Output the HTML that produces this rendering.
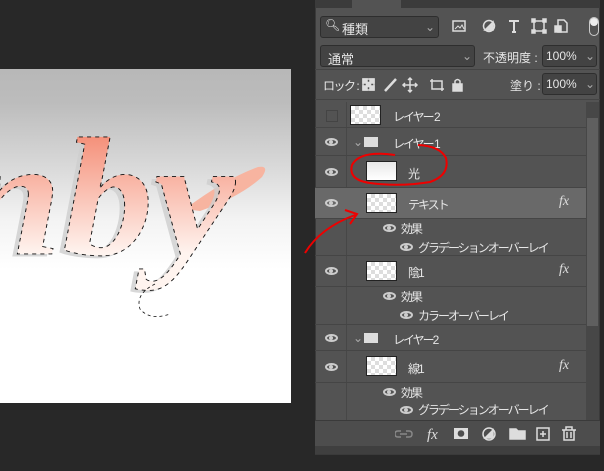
<!DOCTYPE html>
<html><head><meta charset="utf-8"><style>
*{margin:0;padding:0;box-sizing:border-box}
body{width:604px;height:471px;background:#282828;position:relative;overflow:hidden;font-family:"Liberation Sans","Noto Sans CJK JP",sans-serif;font-size:12px;color:#e6e6e6}
.a{position:absolute}
.row{position:absolute;left:315px;width:271px;border-bottom:1px solid #454545}
.row .a{letter-spacing:-2px}
.eye{position:absolute;left:10px;width:13px;height:8px;border:2px solid #ccc;border-radius:50%}
.eye:after{content:"";position:absolute;left:2px;top:0px;width:4px;height:4px;background:#ccc;border-radius:50%}
.chk{background:#fff;background-image:linear-gradient(45deg,#ddd 25%,transparent 25%,transparent 75%,#ddd 75%),linear-gradient(45deg,#ddd 25%,transparent 25%,transparent 75%,#ddd 75%);background-size:8px 8px;background-position:0 0,4px 4px;border:1px solid #222}
.fx{position:absolute;left:559px;font-style:italic;font-family:"Liberation Serif",serif;font-size:14px;color:#ddd}
.dd{position:absolute;background:#434343;border:1px solid #2e2e2e;border-radius:3px}
</style></head><body>
<!-- canvas -->
<div class="a" style="left:0;top:69px;width:291px;height:334px;background:linear-gradient(#b8b8b8 0%,#bcbcbc 10%,#dadada 30%,#f3f3f3 45%,#fff 60%,#fff 100%)"></div>
<svg class="a" style="left:0;top:69px" width="291" height="334">
<defs><linearGradient id="g" x1="0" y1="200" x2="0" y2="300" gradientUnits="userSpaceOnUse"><stop offset="0" stop-color="#f48a72"/><stop offset="1" stop-color="#fff4ef"/></linearGradient></defs>
<path d="M185 140 Q225 110 258 98 Q270 96 262 108 Q240 128 200 142Z" fill="#f7b4a0"/>
<g transform="translate(0,-190) scale(1,1.25)">
<text x="-40" y="300" font-family="Liberation Serif" font-style="italic" font-weight="bold" font-size="135" textLength="275" lengthAdjust="spacingAndGlyphs" fill="#cfcfcf" opacity="0.8" transform="translate(-5,2)">nby</text>
<text x="-40" y="300" font-family="Liberation Serif" font-style="italic" font-weight="bold" font-size="135" textLength="275" lengthAdjust="spacingAndGlyphs" fill="url(#g)" stroke="#111" stroke-width="0.7" stroke-dasharray="3 3">nby</text>
</g>
<path d="M155 215 Q135 225 140 240 Q150 252 170 245" fill="none" stroke="#111" stroke-width="0.8" stroke-dasharray="3 3"/>
</svg>
<!-- panel -->
<div class="a" style="left:315px;top:0;width:285px;height:455px;background:#535353;border:1px solid #3a3a3a"></div>
<div class="a" style="left:315px;top:0;width:285px;height:8px;background:#3b3b3b"></div>
<div class="a" style="left:352px;top:0;width:49px;height:9px;background:#535353"></div>
<div class="dd" style="left:320px;top:16px;width:119px;height:22px"></div>
<div class="a" style="left:325px;top:18px;font-size:12px">&#x1F50D;&#xFE0E;</div>
<div class="a" style="left:342px;top:19px;font-size:13px">種類</div>
<div class="a" style="left:425px;top:20px;color:#aaa">⌄</div>
<svg class="a" style="left:450px;top:17px" width="130" height="20" fill="none" stroke="#ddd" stroke-width="1.5">
<rect x="3" y="4" width="12" height="10"/><path d="M5 12 L8 9 L10 11 L12 8 L14 12" stroke-width="1"/>
<circle cx="39" cy="9" r="5.5"/><path d="M35 13 L43 5 L43 13Z" fill="#ddd"/>
<path d="M59 4 H69 M64 4 V15 M62 15 H66" stroke-width="2"/>
<rect x="84" y="4" width="10" height="10"/><rect x="82" y="2" width="3" height="3" fill="#ddd"/><rect x="93" y="2" width="3" height="3" fill="#ddd"/><rect x="82" y="13" width="3" height="3" fill="#ddd"/><rect x="93" y="13" width="3" height="3" fill="#ddd"/>
<path d="M108 3 H114 L117 6 V15 H108Z"/><rect x="105" y="9" width="6" height="6" fill="#ddd"/>
</svg>
<div class="a" style="left:589px;top:17px;width:10px;height:19px;border:1px solid #ccc;border-radius:5px"></div>
<div class="a" style="left:590px;top:18px;width:8px;height:8px;background:#eee;border-radius:50%"></div>
<div class="dd" style="left:320px;top:45px;width:155px;height:22px"></div>
<div class="a" style="left:328px;top:49px;font-size:13px">通常</div>
<div class="a" style="left:462px;top:49px;color:#aaa">⌄</div>
<div class="a" style="left:483px;top:49px;font-size:12px">不透明度 :</div>
<div class="dd" style="left:542px;top:45px;width:55px;height:22px"></div>
<div class="a" style="left:546px;top:49px;font-size:12px">100%</div>
<div class="a" style="left:585px;top:49px;color:#aaa">⌄</div>
<div class="a" style="left:315px;top:69px;width:285px;height:1px;background:#444"></div>
<div class="a" style="left:323px;top:77px;font-size:12px;letter-spacing:-1.5px">ロック :</div>
<svg class="a" style="left:360px;top:76px" width="110" height="18" fill="none" stroke="#ddd" stroke-width="1.5">
<rect x="3" y="3" width="11" height="11"/><rect x="3" y="3" width="4" height="4" fill="#ddd"/><rect x="10" y="3" width="4" height="4" fill="#ddd"/><rect x="6.5" y="6.5" width="4" height="4" fill="#ddd"/><rect x="3" y="10" width="4" height="4" fill="#ddd"/><rect x="10" y="10" width="4" height="4" fill="#ddd"/>
<path d="M25 15 L36 3" stroke-width="2.5"/>
<path d="M50 2 V16 M43 9 H57 M48 4 L50 2 L52 4 M48 14 L50 16 L52 14 M45 7 L43 9 L45 11 M55 7 L57 9 L55 11"/>
<path d="M70 5 H82 V15 M72 3 V13 H84"/>
<rect x="93" y="8" width="9" height="7" fill="#ddd"/><path d="M95 8 V5 Q97.5 2 100 5 V8"/>
</svg>
<div class="a" style="left:510px;top:77px;font-size:12px">塗り :</div>
<div class="dd" style="left:542px;top:73px;width:55px;height:22px"></div>
<div class="a" style="left:546px;top:77px;font-size:12px">100%</div>
<div class="a" style="left:585px;top:77px;color:#aaa">⌄</div>
<div class="a" style="left:315px;top:99px;width:285px;height:1px;background:#444"></div>
<!-- scrollbar -->
<div class="a" style="left:586px;top:102px;width:13px;height:318px;background:#474747"></div>
<div class="a" style="left:587px;top:118px;width:11px;height:208px;background:#5f5f5f"></div>
<div class="a" style="left:346px;top:102px;width:1px;height:318px;background:#474747"></div>
<!-- rows -->
<div class="row" style="top:102px;height:26px"><div class="a" style="left:11px;top:8px;width:12px;height:12px;border:1px solid #444"></div><div class="a chk" style="left:35px;top:3px;width:31px;height:20px"></div><div class="a" style="left:78px;top:6px">レイヤー 2</div></div>
<div class="row" style="top:128px;height:28px"><div class="eye" style="top:10px"></div><div class="a" style="left:38px;top:7px;color:#aaa">⌄</div><div class="a" style="left:49px;top:9px;width:14px;height:10px;background:#ddd"></div><div class="a" style="left:78px;top:7px">レイヤー 1</div></div>
<div class="row" style="top:156px;height:32px"><div class="eye" style="top:12px"></div><div class="a chk" style="left:51px;top:5px;width:31px;height:20px;background:linear-gradient(#e8e8e8,#fff)"></div><div class="a" style="left:93px;top:9px">光</div></div>
<div class="row" style="top:188px;height:31px;background:#696969"><div class="eye" style="top:11px"></div><div class="a chk" style="left:51px;top:5px;width:31px;height:20px"></div><div class="a" style="left:93px;top:8px">テキスト</div></div>
<div class="fx" style="top:194px">fx</div>
<div class="row" style="top:219px;height:18px;border:0"><div class="eye" style="left:68px;top:5px"></div><div class="a" style="left:86px;top:1px">効果</div></div>
<div class="row" style="top:237px;height:19px"><div class="eye" style="left:85px;top:6px"></div><div class="a" style="left:103px;top:2px">グラデーションオーバーレイ</div></div>
<div class="row" style="top:256px;height:31px"><div class="eye" style="top:11px"></div><div class="a chk" style="left:51px;top:5px;width:31px;height:20px"></div><div class="a" style="left:93px;top:8px">陰1</div></div>
<div class="fx" style="top:262px">fx</div>
<div class="row" style="top:287px;height:18px;border:0"><div class="eye" style="left:68px;top:5px"></div><div class="a" style="left:86px;top:1px">効果</div></div>
<div class="row" style="top:305px;height:20px"><div class="eye" style="left:85px;top:6px"></div><div class="a" style="left:103px;top:2px">カラーオーバーレイ</div></div>
<div class="row" style="top:325px;height:26px"><div class="eye" style="top:9px"></div><div class="a" style="left:38px;top:6px;color:#aaa">⌄</div><div class="a" style="left:49px;top:8px;width:14px;height:10px;background:#ddd"></div><div class="a" style="left:78px;top:6px">レイヤー2</div></div>
<div class="row" style="top:351px;height:32px"><div class="eye" style="top:12px"></div><div class="a chk" style="left:51px;top:5px;width:31px;height:20px"></div><div class="a" style="left:93px;top:9px">線1</div></div>
<div class="fx" style="top:358px">fx</div>
<div class="row" style="top:383px;height:17px;border:0"><div class="eye" style="left:68px;top:5px"></div><div class="a" style="left:86px;top:1px">効果</div></div>
<div class="row" style="top:400px;height:19px;border:0"><div class="eye" style="left:85px;top:6px"></div><div class="a" style="left:103px;top:1px">グラデーションオーバーレイ</div></div>
<!-- bottom bar -->
<div class="a" style="left:315px;top:420px;width:285px;height:26px;background:#4d4d4d;border-top:1px solid #3a3a3a"></div>
<svg class="a" style="left:395px;top:424px" width="185" height="20" fill="none" stroke="#ddd" stroke-width="1.5">
<path d="M6 7 H3 Q0 7 0 10 Q0 13 3 13 H6 M11 7 H14 Q17 7 17 10 Q17 13 14 13 H11 M5 10 H12" stroke="#888"/>
<text x="32" y="15" fill="#ddd" stroke="none" font-family="Liberation Serif" font-style="italic" font-size="15">fx</text>
<rect x="59" y="4" width="14" height="11" fill="#ddd" stroke="none"/><circle cx="66" cy="9.5" r="3.3" fill="#4d4d4d" stroke="none"/>
<circle cx="94" cy="10" r="6"/><path d="M90 14 L98 6 L98 14Z" fill="#ddd"/>
<path d="M115 5 H121 L123 7 H130 V15 H115Z" fill="#ddd"/>
<rect x="142" y="4" width="12" height="12"/><path d="M148 7 V13 M145 10 H151"/>
<path d="M167 6 H181 M171 6 V3 H177 V6 M169 6 V16 H179 V6 M172 8 V14 M176 8 V14"/>
</svg>
<div class="a" style="left:315px;top:446px;width:285px;height:8px;background:#3f3f3f"></div>
<!-- annotations -->
<svg class="a" style="left:0;top:0" width="604" height="471">
<path d="M395 155 Q360 150 352 165 Q348 180 370 183 Q400 187 430 182 Q450 175 446 158 Q440 146 418 145" fill="none" stroke="#e00" stroke-width="2"/>
<path d="M305 253 Q320 228 355 215 M345 210 L357 214 L350 224" fill="none" stroke="#e00" stroke-width="2"/>
</svg>
</body></html>
